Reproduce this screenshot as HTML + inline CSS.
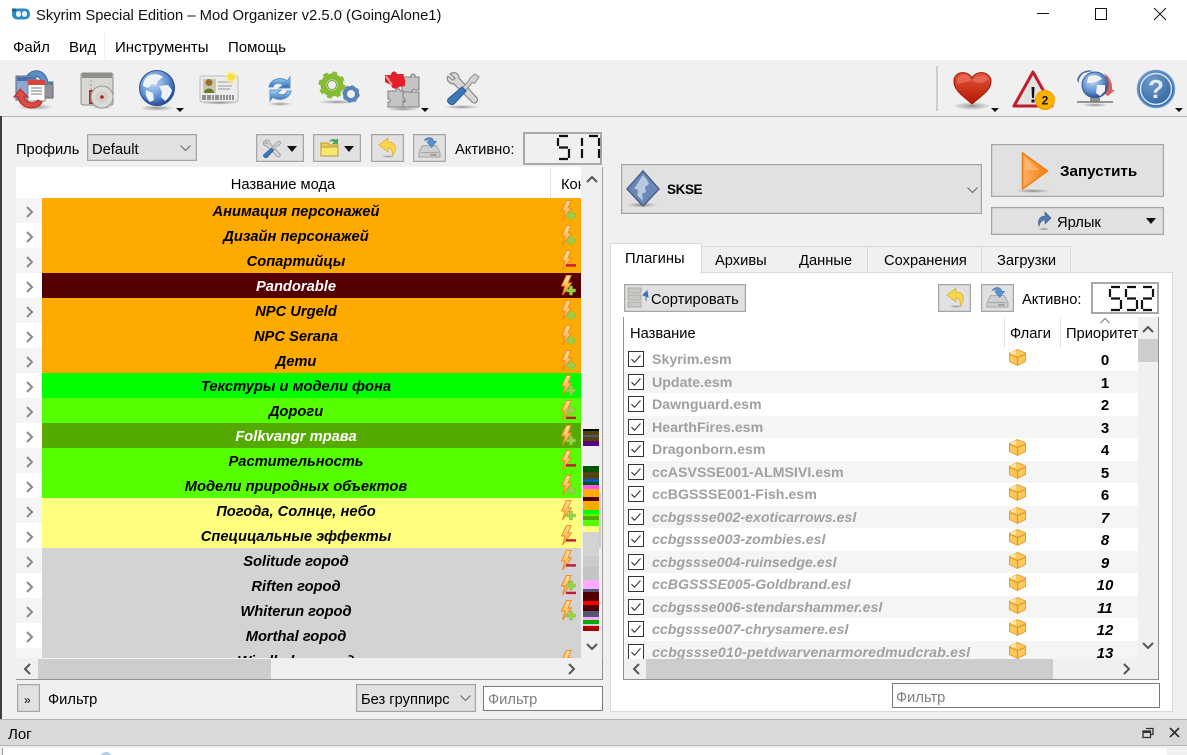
<!DOCTYPE html>
<html lang="ru"><head><meta charset="utf-8"><title>Mod Organizer</title>
<style>
*{box-sizing:border-box}
html,body{margin:0;padding:0;width:1187px;height:755px;overflow:hidden;background:#f0f0f0;font-family:"Liberation Sans","Noto Sans CJK SC",sans-serif;font-size:14.7px;color:#000}
#app{position:relative;width:1187px;height:755px;overflow:hidden}
.a{position:absolute}
.t{position:absolute;white-space:nowrap;line-height:18px;height:18px}
.btn{position:absolute;background:#e1e1e1;border:1px solid #a5a5a5;box-shadow:inset 0 0 0 .5px #c4c4c4}
.row{position:absolute;left:42px;width:508px;height:25px;line-height:29px;text-align:center;font-weight:bold;font-style:italic;white-space:nowrap;font-size:14.7px}
.p{position:absolute;left:0;width:514px;height:22.5px}
.p.s{background:#f5f5f5}
.n{position:absolute;left:28px;top:1px;line-height:23px;font-weight:bold;font-size:14.2px;color:#a0a0a0;white-space:nowrap}
.o{position:absolute;left:465px;width:32px;top:1px;line-height:23px;text-align:center;font-weight:bold;font-size:15px}
.i .n,.i .o{font-style:italic}
svg{position:absolute;overflow:visible}
</style></head><body><div id="app">

<svg width="0" height="0" style="left:0;top:0"><defs>
<linearGradient id="gO" x1="0" y1="0" x2="0" y2="1"><stop offset="0" stop-color="#ffe3a3"/><stop offset="1" stop-color="#ffa42e"/></linearGradient>
<linearGradient id="gG" x1="0" y1="0" x2="0" y2="1"><stop offset="0" stop-color="#a4dcf8"/><stop offset="1" stop-color="#2f62b0"/></linearGradient>
<radialGradient id="gGlobe" cx=".4" cy=".35" r=".7"><stop offset="0" stop-color="#c7dcf5"/><stop offset=".6" stop-color="#5e8fd0"/><stop offset="1" stop-color="#213f88"/></radialGradient>
<radialGradient id="gHelp" cx=".4" cy=".3" r=".8"><stop offset="0" stop-color="#6f9ccb"/><stop offset="1" stop-color="#2a5c9c"/></radialGradient>
<linearGradient id="gH" x1="0" y1="0" x2="0" y2="1"><stop offset="0" stop-color="#e2553e"/><stop offset="1" stop-color="#b51700"/></linearGradient>
<linearGradient id="gPlay" x1="0" y1="0" x2="1" y2="0"><stop offset="0" stop-color="#ffb066"/><stop offset="1" stop-color="#f47b0a"/></linearGradient>
<radialGradient id="gSh"><stop offset="0" stop-color="#000" stop-opacity=".38"/><stop offset="1" stop-color="#000" stop-opacity="0"/></radialGradient>
<symbol id="bolt" viewBox="0 0 20 22" width="20" height="22" overflow="visible"><path d="M6.500 .5 L1.500 11 L5 11 L2.500 20 L11.500 8 L8 8 L11 .5Z" fill="url(#gO)" stroke="#ee8a20" stroke-width="1"/></symbol>
<symbol id="plus" viewBox="0 0 20 22" width="20" height="22" overflow="visible"><path d="M6.500 14H9.500V11H12.500V14H15.500V17H12.500V20H9.500V17H6.500Z" fill="#9bd04f" stroke="#86b93c" stroke-width=".5"/></symbol>
<symbol id="minus" viewBox="0 0 20 22" width="20" height="22" overflow="visible"><rect x="6" y="14.200" width="10" height="2.400" fill="#c8173c"/></symbol>
<symbol id="box" viewBox="0 0 18 18" width="18" height="18" overflow="visible"><path d="M.5 4.500 L8.500 .5 L16.500 4 L16.500 12.500 L8.500 16.500 L.5 12.500Z" fill="#fcc85a" stroke="#e6a036" stroke-width="1"/><path d="M1 5.500L8.500 8.500L16 5.500M8.500 8.500V16" fill="none" stroke="#dc9428" stroke-width="1.100"/><path d="M2 3.500L7 1.500V6L2 5Z" fill="#ffeab0"/></symbol>
<symbol id="chk" viewBox="0 0 16 16" width="16" height="16" overflow="visible"><rect x=".5" y=".5" width="15" height="15" fill="#fff" stroke="#333"/><path d="M3.500 8.200L6.500 11.200L12.500 4.500" fill="none" stroke="#333" stroke-width="1.100"/></symbol>
<symbol id="tools" viewBox="0 0 36 36" width="36" height="36" overflow="visible"><path d="M5 3 C9 0 14 2 14 7 L32 27 C34 30 30 34 27 31 L9 13 C4 13 1 9 3 5 L8 9 L10 7Z" fill="#d6d6d6" stroke="#888" stroke-width="1.200"/><path d="M30 3 L34 6 L30 12 L27 12 L20 20 L17 17 L24 9.500 L25 7Z" fill="#cfd3d6" stroke="#8a8a8a"/><path d="M17 16 L21 20 L9 33 C6 35 1 31 3 28Z" fill="#3d77b8" stroke="#25568f"/></symbol>
<symbol id="undo" viewBox="0 0 18 20" width="18" height="20" overflow="visible"><ellipse cx="9" cy="18.500" rx="7" ry="1.300" fill="url(#gSh)"/><path d="M9 0 L0 7 L9 14 V10 C12 10 14 12 13 18 C18 13 18 4 9 4Z" fill="#f7d54a" stroke="#dcae2a" stroke-width=".7"/></symbol>
<symbol id="save" viewBox="0 0 26 26" width="26" height="26" overflow="visible"><path d="M5 11H21L25 19V24H1V19Z" fill="#cdd0d2" stroke="#9a9ea0"/><path d="M3 19H23" stroke="#999"/><rect x="14" y="20.500" width="7" height="2" fill="#999ea0"/><path d="M7 5C10 0 17 1 18 6H21L15.500 13L10 6.500H14C13 4.500 10 4 7 5Z" fill="#5c92ca" stroke="#3f74ad" stroke-width=".7"/></symbol>
</defs></svg>

<!-- title bar -->
<div class="a" style="left:0;top:0;width:1187px;height:60px;background:#fff"></div>
<svg style="left:11px;top:7px" width="20" height="14"><rect x="1" y="1.500" width="18" height="11" rx="5" fill="#2d88c7"/><rect x="5" y="4" width="5" height="6" rx="2.500" fill="#e9f4fb"/><rect x="11" y="4" width="5" height="6" rx="2.500" fill="#e9f4fb"/><rect x="1" y="1.500" width="4" height="3" fill="#1d5f8d"/></svg>
<div class="t" style="left:36px;top:7px;font-size:14.8px;color:#111">Skyrim Special Edition – Mod Organizer v2.5.0 (GoingAlone1)</div>
<svg style="left:1030px;top:0" width="157" height="30" fill="none" stroke="#111" stroke-width="1"><path d="M7 13.500H19"/><rect x="65.500" y="8.500" width="11" height="11"/><path d="M124 8L136 20M136 8L124 20"/></svg>
<!-- menu -->
<div class="t" style="left:13px;top:39px;font-size:15px">Файл</div>
<div class="t" style="left:69px;top:39px;font-size:15px">Вид</div>
<div class="a" style="left:104px;top:33px;width:1px;height:26px;background:#eee"></div>
<div class="t" style="left:115px;top:39px;font-size:15px">Инструменты</div>
<div class="t" style="left:228px;top:39px;font-size:15px">Помощь</div>
<!-- toolbar -->
<div class="a" style="left:0;top:60px;width:1187px;height:56.500px;background:#f0f0f0;border-bottom:1px solid #b4b4b4"></div>
<svg style="left:0;top:60px;filter:blur(.35px)" width="1187" height="56">
  <!-- 1 -->
  <ellipse cx="35" cy="47" rx="18" ry="3" fill="url(#gSh)"/>
  <path d="M25 22C26 9 44 5 48 22L53 22L46 31L38 22L42 22C39 14 31 15 30 23Z" fill="#5f8fc7" stroke="#3a6aa4"/>
  <rect x="16" y="16" width="20" height="24" fill="#8ea6cf" stroke="#596a84"/><rect x="17" y="17" width="18" height="4" fill="#4a6fb0"/>
  <rect x="35" y="24" width="18" height="14" fill="#8d9298" stroke="#666"/>
  <rect x="28" y="20" width="17" height="21" fill="#fff" stroke="#888"/><rect x="28" y="20" width="17" height="5" fill="#d8433c"/>
  <path d="M31 28H42M31 31H42M31 34H42" stroke="#777"/>
  <path d="M20 29L28 37L24 37C25 44 36 44 38 40L42 42C38 51 20 50 18 37L14 37Z" fill="#dc4b46" stroke="#b32a27"/>
  <!-- 2 -->
  <rect x="81" y="13" width="32" height="32" rx="2" fill="#d8d7d3" stroke="#8d8c88"/><rect x="82" y="13" width="30" height="5" fill="#8f8d88"/>
  <rect x="89" y="30" width="4" height="14" fill="#b92c22"/><path d="M91 20V44" stroke="#999" stroke-dasharray="2 2"/>
  <ellipse cx="102" cy="47" rx="11" ry="2" fill="url(#gSh)"/>
  <circle cx="102" cy="37" r="11" fill="#dcdcd6" stroke="#999"/><circle cx="102" cy="37" r="6" fill="#cfcfc8"/><circle cx="102" cy="37" r="1.800" fill="#b52020"/>
  <!-- 3 globe -->
  <ellipse cx="157" cy="48" rx="17" ry="3" fill="url(#gSh)"/>
  <circle cx="157" cy="28" r="17.500" fill="url(#gGlobe)" stroke="#2b4c93"/>
  <path d="M148 16C152 13 160 14 163 17L158 21L156 25L152 24L148 28L143 26C143 22 145 18 148 16ZM159 26L168 25L172 30C171 35 168 39 165 41L161 37L162 32ZM146 30L153 33L154 40L150 42C147 39 145 35 146 30Z" fill="#eef3f8"/>
  <path d="M176 48H184L180 52Z" fill="#111"/>
  <!-- 4 card -->
  <rect x="200" y="16" width="38" height="26" rx="2" fill="#ececea" stroke="#bbb"/><ellipse cx="219" cy="43" rx="18" ry="1.500" fill="url(#gSh)"/>
  <rect x="203" y="19" width="13" height="14" fill="#c9c7b0"/><circle cx="209" cy="22.500" r="3.500" fill="#9c6f2f"/><path d="M204 33C204 27 214 27 214 33Z" fill="#6a7a2a"/>
  <path d="M218 22H233M218 26H232M218 29H230" stroke="#999"/>
  <path d="M203 35V40M205 35V40M208 35V40M210 35V40M213 35V40M216 35V40M218 35V40M221 35V40M224 35V40M227 35V40M230 35V40M233 35V40" stroke="#333" stroke-width="1"/>
  <circle cx="231" cy="17" r="6" fill="#ffef7f" opacity=".6"/><circle cx="231" cy="17" r="3.500" fill="#f6e03a"/>
  <!-- 5 refresh -->
  <ellipse cx="280" cy="44" rx="12" ry="2" fill="url(#gSh)"/>
  <path d="M269 27C270 19 282 16 287 21L290 17V28H279L283 25C279 22 274 23 273 27Z" fill="url(#gG)" stroke="#5a93cc"/>
  <path d="M291 31C290 39 278 42 273 37L270 41V30H281L277 33C281 36 286 35 287 31Z" fill="url(#gG)" stroke="#5a93cc"/>
  <!-- 6 gears -->
  <ellipse cx="337" cy="42" rx="20" ry="2" fill="url(#gSh)"/>
  <circle cx="332" cy="25" r="11" fill="none" stroke="#83bb33" stroke-width="5" stroke-dasharray="4.500 4.130"/><circle cx="332" cy="25" r="8.500" fill="none" stroke="#84bd34" stroke-width="6"/><circle cx="332" cy="25" r="4.500" fill="#f0f0f0" stroke="#6d9c2c"/>
  <circle cx="351" cy="34" r="6" fill="none" stroke="#5885b5" stroke-width="4"/><circle cx="351" cy="34" r="7.500" fill="none" stroke="#5885b5" stroke-width="2.500" stroke-dasharray="3 2.890"/><circle cx="351" cy="34" r="2.500" fill="#f0f0f0"/>
  <!-- 7 puzzle -->
  <ellipse cx="403" cy="49" rx="17" ry="2" fill="url(#gSh)"/>
  <g fill="#c4c4c4" stroke="#7f7f7f"><path d="M403 17H411C410 13 416 13 415 17H419V30H415C413 28 411 30 413 33H402V23C405 24 405 19 403 19Z"/><path d="M388 31H396C395 28 401 28 400 31H403V38C406 37 406 42 403 41V47H388V42C391 43 391 38 388 39Z"/><path d="M403 32H419V47H403V42C406 43 406 38 403 38Z"/></g>
  <path d="M385 15L391 15C391 11 396 10 397 14L404 14C402 17 407 20 405 22L405 26L399 27C396 30 392 29 391 25L385 22Z" fill="#e2202a"/><path d="M386 16L392 25" stroke="#f0a0a0" stroke-width="2"/>
  <path d="M421 48H429L425 52Z" fill="#111"/>
  <!-- 8 tools -->
  <ellipse cx="462" cy="47" rx="18" ry="2" fill="url(#gSh)"/>
  <use href="#tools" x="445" y="11"/>
  <!-- right side -->
  <rect x="936" y="6" width="2" height="45" fill="#ccc"/>
  <ellipse cx="972" cy="46" rx="19" ry="4" fill="url(#gSh)"/>
  <path d="M972 44C963 36 953 30 954 20C955 11 968 10 972 18C976 10 989 11 991 20C992 30 981 36 972 44Z" fill="url(#gH)" stroke="#a51a08"/>
  <path d="M957 20C960 13 969 14 971 19C976 25 983 24 989 19C985 14 976 15 972 20C967 22 962 23 957 24Z" fill="#ef7d6d" opacity=".55"/>
  <path d="M991 48H999L995 52Z" fill="#111"/>
  <path d="M1033 12L1052 46H1014Z" fill="#e2e2e2" stroke="#c21c2c" stroke-width="3" stroke-linejoin="round"/>
  <path d="M1031.500 27H1034.500L1034 38H1032Z M1031.500 39.500H1034.500V42.500H1031.500Z" fill="#111"/>
  <circle cx="1045" cy="40" r="9.500" fill="#fdb100" stroke="#f79a00"/><text x="1045" y="44.500" font-size="12" font-weight="bold" text-anchor="middle" font-family="Liberation Sans,sans-serif" fill="#111">2</text>
  <path d="M1077 20C1079 12 1087 9 1093 11L1084 13C1080 16 1078 20 1079 24Z" fill="#4b6fa5"/><path d="M1104 13C1110 17 1113 24 1112 30L1115 30L1108 36L1101 32L1107 31C1108 24 1107 18 1104 13Z" fill="#d86060"/>
  <circle cx="1095" cy="25" r="13" fill="url(#gGlobe)" stroke="#445f98"/><path d="M1088 17C1092 14 1100 15 1102 19L1096 22L1091 23L1087 23ZM1097 25L1105 25L1105 31L1100 36L1096 33Z" fill="#f1f1f1"/>
  <rect x="1090" y="38" width="10" height="4" fill="#8f8f8f"/><path d="M1077 42H1113" stroke="#777" stroke-width="1.500"/><ellipse cx="1095" cy="45" rx="13" ry="2" fill="url(#gSh)"/>
  <circle cx="1156" cy="29" r="18.500" fill="url(#gHelp)" stroke="#6b9bd0" stroke-width="1.500"/><circle cx="1156" cy="29" r="15.500" fill="none" stroke="#d5e3f2" stroke-width="1.500"/>
  <text x="1156" y="38" font-size="26" font-weight="bold" text-anchor="middle" font-family="Liberation Sans,sans-serif" fill="#e4ebf3">?</text>
  <path d="M1175 48H1183L1179 52Z" fill="#111"/>
</svg>

<!-- left edge -->
<div class="a" style="left:0;top:116px;width:2px;height:604px;background:#3a3f44"></div>

<!-- profile row -->
<div class="t" style="left:16px;top:141px">Профиль</div>
<div class="btn" style="left:87px;top:134px;width:110px;height:27px"></div>
<div class="t" style="left:92px;top:141px">Default</div>
<svg style="left:180px;top:145px" width="11" height="7" fill="none" stroke="#666"><path d="M.5 .5L5.500 5.500L10.500 .5"/></svg>
<div class="btn" style="left:256px;top:134px;width:48px;height:28px"></div>
<svg style="left:262px;top:139px" width="20" height="20"><use href="#tools" transform="scale(.56)"/></svg>
<svg style="left:287px;top:146px" width="10" height="6"><path d="M0 0H10L5 6Z" fill="#111"/></svg>
<div class="btn" style="left:313px;top:134px;width:48px;height:28px"></div>
<svg style="left:320px;top:137px" width="20" height="21"><path d="M1 6H8L10 8H18V19H1Z" fill="#edd04f" stroke="#b39c30"/><path d="M1 10H18V19H1Z" fill="#f8e76f" stroke="#b39c30"/><path d="M9 5C10 2 14 1 16 3L18 1V7H12L14 5C13 4 11 4 9 5Z" fill="#4fa24f"/></svg>
<svg style="left:344px;top:146px" width="10" height="6"><path d="M0 0H10L5 6Z" fill="#111"/></svg>
<div class="btn" style="left:371px;top:134px;width:33px;height:28px"></div>
<svg style="left:379px;top:138px" width="18" height="20"><use href="#undo"/></svg>
<div class="btn" style="left:413px;top:134px;width:33px;height:28px"></div>
<svg style="left:418px;top:136px" width="26" height="22"><use href="#save" transform="scale(.88)"/></svg>
<div class="t" style="left:455px;top:141px">Активно:</div>
<div class="a" style="left:523px;top:132px;width:79px;height:33px;border:2px solid #a8a8a8;background:#f0f0f0"></div>
<svg style="left:556px;top:135px" width="46" height="26" fill="none" stroke="#111" stroke-width="2.200"><path d="M3 1H12M2 3V11M3 12.500H12M13 14V23M3 24H12"/><path d="M26 3V11M26 14V23"/><path d="M33 1H42M43 3V11M43 14V23"/></svg>

<!-- mod list -->
<div class="a" style="left:16px;top:167px;width:587px;height:513px;background:#fff;overflow:hidden">
  <div class="a" style="left:534px;top:0;width:1px;height:31px;background:#e3e3e3"></div>
  <div class="t" style="left:0;width:534px;top:9px;text-align:center">Название мода</div>
  <div class="t" style="left:545px;top:9px;width:20px;overflow:hidden">Контент</div>
  <div class="a" style="left:565px;top:0;width:22px;height:491px;background:#f0f0f0"></div>
  <div class="a" style="left:0;top:491px;width:587px;height:22px;background:#f0f0f0"></div>
</div>
<div class="a" style="left:16px;top:198px;width:26px;height:460px;background:repeating-linear-gradient(180deg,#f5f5f5 0,#f5f5f5 25px,#fff 25px,#fff 50px)"></div>
<div class="a" style="left:42px;top:198px;width:539px;height:460px;overflow:hidden;background:#d3d3d3">
  <div class="a" style="left:0;top:0;width:539px;height:75px;background:#ffaa00"></div>
  <div class="a" style="left:0;top:75px;width:539px;height:25px;background:#550000"></div>
  <div class="a" style="left:0;top:100px;width:539px;height:75px;background:#ffaa00"></div>
  <div class="a" style="left:0;top:175px;width:539px;height:25px;background:#00ff00"></div>
  <div class="a" style="left:0;top:200px;width:539px;height:25px;background:#55ff00"></div>
  <div class="a" style="left:0;top:225px;width:539px;height:25px;background:#55aa00"></div>
  <div class="a" style="left:0;top:250px;width:539px;height:50px;background:#55ff00"></div>
  <div class="a" style="left:0;top:300px;width:539px;height:50px;background:#ffff7f"></div>
  <div class="row" style="left:0;top:0">Анимация персонажей</div>
  <div class="row" style="left:0;top:25px">Дизайн персонажей</div>
  <div class="row" style="left:0;top:50px">Сопартийцы</div>
  <div class="row" style="left:0;top:75px;color:#fff">Pandorable</div>
  <div class="row" style="left:0;top:100px">NPC Urgeld</div>
  <div class="row" style="left:0;top:125px">NPC Serana</div>
  <div class="row" style="left:0;top:150px">Дети</div>
  <div class="row" style="left:0;top:175px">Текстуры и модели фона</div>
  <div class="row" style="left:0;top:200px">Дороги</div>
  <div class="row" style="left:0;top:225px;color:#fff">Folkvangr трава</div>
  <div class="row" style="left:0;top:250px">Растительность</div>
  <div class="row" style="left:0;top:275px">Модели природных объектов</div>
  <div class="row" style="left:0;top:300px">Погода, Солнце, небо</div>
  <div class="row" style="left:0;top:325px">Специцальные эффекты</div>
  <div class="row" style="left:0;top:350px">Solitude город</div>
  <div class="row" style="left:0;top:375px">Riften город</div>
  <div class="row" style="left:0;top:400px">Whiterun город</div>
  <div class="row" style="left:0;top:425px">Morthal город</div>
  <div class="row" style="left:0;top:450px">Windhelm город</div>
  <svg style="left:518px;top:0" width="21" height="460">
    <use href="#bolt" y="2"/><use href="#plus" y="2"/>
    <use href="#bolt" y="27"/><use href="#plus" y="27"/>
    <use href="#bolt" y="52"/><use href="#minus" y="52"/>
    <use href="#bolt" y="77"/><use href="#plus" y="77"/>
    <use href="#bolt" y="102"/><use href="#plus" y="102"/>
    <use href="#bolt" y="127"/><use href="#plus" y="127"/>
    <use href="#bolt" y="152"/><use href="#plus" y="152"/>
    <use href="#bolt" y="177"/><use href="#plus" y="177"/>
    <use href="#bolt" y="202"/><use href="#plus" y="197"/><use href="#minus" y="204.500"/>
    <use href="#bolt" y="227"/><use href="#plus" y="227"/>
    <use href="#bolt" y="252"/><use href="#minus" y="252"/>
    <use href="#bolt" y="277"/><use href="#plus" y="277"/>
    <use href="#bolt" y="302"/><use href="#plus" y="302"/>
    <use href="#bolt" y="327"/><use href="#minus" y="327"/>
    <use href="#bolt" y="352"/><use href="#minus" y="352"/>
    <use href="#bolt" y="377"/><use href="#plus" y="372"/><use href="#minus" y="379.500"/>
    <use href="#bolt" y="402"/><use href="#plus" y="402"/>
    <use href="#bolt" y="452"/>
  </svg>
</div>
<svg style="left:16px;top:198px" width="26" height="460" fill="none" stroke="#8a8a8a" stroke-width="2"><path d="M11 9L16 14L11 19M11 34L16 39L11 44M11 59L16 64L11 69M11 84L16 89L11 94M11 109L16 114L11 119M11 134L16 139L11 144M11 159L16 164L11 169M11 184L16 189L11 194M11 209L16 214L11 219M11 234L16 239L11 244M11 259L16 264L11 269M11 284L16 289L11 294M11 309L16 314L11 319M11 334L16 339L11 344M11 359L16 364L11 369M11 384L16 389L11 394M11 409L16 414L11 419M11 434L16 439L11 444"/></svg>
<!-- overview strip -->
<div class="a" style="left:583px;top:429px;width:16px;height:202px;background:linear-gradient(180deg,#000 0,#000 2px,#4f4400 2px,#4f4400 6px,#555577 6px,#555577 8px,#554400 8px,#554400 12px,#550088 12px,#550088 17px,#f0f0f0 17px,#f0f0f0 37px,#005500 37px,#005500 43px,#554400 43px,#554400 50px,#0055cc 50px,#0055cc 53px,#005500 53px,#005500 56px,#ff55ff 56px,#ff55ff 60px,#ffaa00 60px,#ffaa00 68px,#550000 68px,#550000 72px,#ffaa00 72px,#ffaa00 81px,#00ff00 81px,#00ff00 85px,#55ff00 85px,#55ff00 87px,#55aa00 87px,#55aa00 91px,#55ff00 91px,#55ff00 97px,#ffff7f 97px,#ffff7f 103px,#d3d3d3 103px,#d3d3d3 127px,#cbcbc8 127px,#cbcbc8 138px,#c1c5c5 138px,#c1c5c5 151px,#ffaaff 151px,#ffaaff 160px,#555577 160px,#555577 163px,#550000 163px,#550000 172px,#ff0000 172px,#ff0000 176px,#550000 176px,#550000 182px,#555577 182px,#555577 188px,#ffaaff 188px,#ffaaff 191px,#00aa00 191px,#00aa00 195px,#d3d3d3 195px,#d3d3d3 197px,#aa0000 197px,#aa0000 202px)"></div>
<div class="a" style="left:599px;top:492px;width:2px;height:56px;background:#cdcdcd"></div>
<svg style="left:581px;top:167px" width="22" height="491" fill="none" stroke="#555" stroke-width="2"><path d="M6 15L11 10L16 15M6 477L11 482L16 477"/></svg>
<div class="a" style="left:16px;top:658px;width:587px;height:22px;background:#f0f0f0;border-bottom:1px solid #8f8f8f;border-right:1px solid #8f8f8f"></div>
<div class="a" style="left:38px;top:659px;width:233px;height:20px;background:#cdcdcd"></div>
<svg style="left:16px;top:659px" width="570" height="20" fill="none" stroke="#555" stroke-width="2"><path d="M14 5L9 10L14 15M553 5L558 10L553 15"/></svg>
<div class="a" style="left:602px;top:167px;width:1px;height:492px;background:#a0a0a0"></div>

<!-- filter row left -->
<div class="btn" style="left:17px;top:684px;width:23px;height:28px"></div>
<div class="t" style="left:24px;top:691px;font-size:12px">»</div>
<div class="t" style="left:48px;top:691px">Фильтр</div>
<div class="btn" style="left:356px;top:684px;width:120px;height:28px"></div>
<div class="t" style="left:361px;top:691px;width:93px;overflow:hidden">Без группирс</div>
<svg style="left:460px;top:695px" width="11" height="7" fill="none" stroke="#666"><path d="M.5 .5L5.500 5.500L10.500 .5"/></svg>
<div class="a" style="left:483px;top:686px;width:120px;height:25px;background:#fff;border:1px solid #7a7a7a"></div>
<div class="t" style="left:488px;top:691px;color:#7f7f7f">Фильтр</div>

<!-- right top -->
<div class="btn" style="left:621px;top:164px;width:361px;height:50px"></div>
<svg style="left:626px;top:170px" width="38" height="38"><ellipse cx="16" cy="35" rx="15" ry="2.500" fill="url(#gSh)"/><path d="M17 1L33 19L17 36L1 19Z" fill="#6a88b8" stroke="#4f6188" stroke-width="1.500"/><path d="M17 5L8 19C12 18 13 22 11 25L17 31L16 24L20 22L19 17L23 14L21 10Z" fill="#b7c8e0"/></svg>
<div class="t" style="left:667px;top:181px;font-weight:bold;font-size:13.500px;letter-spacing:-.4px">SKSE</div>
<svg style="left:967px;top:187px" width="11" height="7" fill="none" stroke="#666"><path d="M.5 .5L5.500 5.500L10.500 .5"/></svg>
<div class="btn" style="left:991px;top:144px;width:173px;height:53px"></div>
<svg style="left:1015px;top:150px" width="36" height="44"><ellipse cx="18" cy="41" rx="17" ry="2" fill="url(#gSh)"/><path d="M7.500 3L32.500 21L7.500 39Z" fill="url(#gPlay)" stroke="#ef7d10" stroke-width="1.500"/><path d="M10 8L25 20L10 20Z" fill="#ffc98f" opacity=".5"/></svg>
<div class="t" style="left:1060px;top:163px;font-weight:bold;font-size:15.200px">Запустить</div>
<div class="btn" style="left:991px;top:207px;width:173px;height:28px"></div>
<svg style="left:1036px;top:211px" width="18" height="22"><ellipse cx="8" cy="18" rx="6" ry="1.500" fill="url(#gSh)"/><path d="M3 15C1 8 5 5 9 5V1L15 7L9 13V9C6 9 4 11 3 15Z" fill="#4f79ac" stroke="#3b5d87" stroke-width=".6"/></svg>
<div class="t" style="left:1057px;top:214px">Ярлык</div>
<svg style="left:1146px;top:218px" width="10" height="6"><path d="M0 0H10L5 6Z" fill="#111"/></svg>

<!-- tabs -->
<div class="a" style="left:701px;top:246px;width:370px;height:27px;background:#f0f0f0;border:1px solid #d9d9d9"></div>
<div class="a" style="left:867px;top:246px;width:1px;height:26px;background:#d9d9d9"></div>
<div class="a" style="left:981px;top:246px;width:1px;height:26px;background:#d9d9d9"></div>
<div class="a" style="left:610px;top:272px;width:563px;height:440px;background:#fff;border:1px solid #d9d9d9"></div>
<div class="a" style="left:610px;top:243px;width:92px;height:31px;background:#fff;border:1px solid #d9d9d9;border-bottom:0"></div>
<div class="t" style="left:625px;top:250px">Плагины</div>
<div class="t" style="left:715px;top:252px">Архивы</div>
<div class="t" style="left:799px;top:252px">Данные</div>
<div class="t" style="left:884px;top:252px">Сохранения</div>
<div class="t" style="left:997px;top:252px">Загрузки</div>

<!-- plugin top row -->
<div class="btn" style="left:624px;top:284px;width:122px;height:28px"></div>
<svg style="left:628px;top:288px" width="22" height="20"><rect x="0" y="0" width="13" height="5" fill="#c9c9c4" stroke="#aaa"/><rect x="0" y="7" width="13" height="5" fill="#c9c9c4" stroke="#aaa"/><rect x="0" y="14" width="13" height="5" fill="#c9c9c4" stroke="#aaa"/><path d="M15 7L19 3L20 9Z M18 7V13" fill="#3e74b2" stroke="#3e74b2"/></svg>
<div class="t" style="left:651px;top:291px">Сортировать</div>
<div class="btn" style="left:938px;top:284px;width:33px;height:28px"></div>
<svg style="left:947px;top:288px" width="18" height="20"><use href="#undo"/></svg>
<div class="btn" style="left:981px;top:284px;width:33px;height:28px"></div>
<svg style="left:986px;top:286px" width="26" height="24"><use href="#save" transform="scale(.88)"/></svg>
<div class="t" style="left:1022px;top:291px">Активно:</div>
<div class="a" style="left:1091px;top:282px;width:68px;height:32px;border:2px solid #a8a8a8;background:#fff"></div>
<svg style="left:1108px;top:286px" width="48" height="26" fill="none" stroke="#111" stroke-width="2.200"><path d="M3 1H12M2 3V11M3 12.500H12M13 14V23M3 24H12"/><path d="M19 1H28M18 3V11M19 12.500H28M29 14V23M19 24H28"/><path d="M35 1H44M45 3V11M35 12.500H44M34 14V23M35 24H44"/></svg>

<!-- plugin list -->
<div class="a" style="left:623px;top:317px;width:536px;height:363px;background:#fff;border-left:1px solid #8f8f8f;border-right:1px solid #8f8f8f;border-bottom:1px solid #8f8f8f;overflow:hidden">
  <div class="t" style="left:6px;top:8px">Название</div>
  <div class="a" style="left:380px;top:0;width:1px;height:31px;background:#e3e3e3"></div>
  <div class="t" style="left:386px;top:8px">Флаги</div>
  <div class="a" style="left:436px;top:0;width:1px;height:31px;background:#e3e3e3"></div>
  <div class="t" style="left:442px;top:8px;width:72px;overflow:hidden">Приоритет</div>
  <svg style="left:476px;top:1px" width="10" height="6" fill="none" stroke="#777"><path d="M.5 5L5 .5L9.500 5"/></svg>
  <div class="a" style="left:0;top:31px;width:514px;height:311px;overflow:hidden">
    <div class="p" style="top:0"><svg style="left:4px;top:3px" width="16" height="16"><use href="#chk"/></svg><span class="n">Skyrim.esm</span><svg style="left:385px;top:1px" width="18" height="18"><use href="#box"/></svg><span class="o">0</span></div>
    <div class="p s" style="top:22.500px"><svg style="left:4px;top:3px" width="16" height="16"><use href="#chk"/></svg><span class="n">Update.esm</span><span class="o">1</span></div>
    <div class="p" style="top:45px"><svg style="left:4px;top:3px" width="16" height="16"><use href="#chk"/></svg><span class="n">Dawnguard.esm</span><span class="o">2</span></div>
    <div class="p s" style="top:67.500px"><svg style="left:4px;top:3px" width="16" height="16"><use href="#chk"/></svg><span class="n">HearthFires.esm</span><span class="o">3</span></div>
    <div class="p" style="top:90px"><svg style="left:4px;top:3px" width="16" height="16"><use href="#chk"/></svg><span class="n">Dragonborn.esm</span><svg style="left:385px;top:1px" width="18" height="18"><use href="#box"/></svg><span class="o">4</span></div>
    <div class="p s" style="top:112.500px"><svg style="left:4px;top:3px" width="16" height="16"><use href="#chk"/></svg><span class="n">ccASVSSE001-ALMSIVI.esm</span><svg style="left:385px;top:1px" width="18" height="18"><use href="#box"/></svg><span class="o">5</span></div>
    <div class="p" style="top:135px"><svg style="left:4px;top:3px" width="16" height="16"><use href="#chk"/></svg><span class="n">ccBGSSSE001-Fish.esm</span><svg style="left:385px;top:1px" width="18" height="18"><use href="#box"/></svg><span class="o">6</span></div>
    <div class="p s i" style="top:157.500px"><svg style="left:4px;top:3px" width="16" height="16"><use href="#chk"/></svg><span class="n">ccbgssse002-exoticarrows.esl</span><svg style="left:385px;top:1px" width="18" height="18"><use href="#box"/></svg><span class="o">7</span></div>
    <div class="p i" style="top:180px"><svg style="left:4px;top:3px" width="16" height="16"><use href="#chk"/></svg><span class="n">ccbgssse003-zombies.esl</span><svg style="left:385px;top:1px" width="18" height="18"><use href="#box"/></svg><span class="o">8</span></div>
    <div class="p s i" style="top:202.500px"><svg style="left:4px;top:3px" width="16" height="16"><use href="#chk"/></svg><span class="n">ccbgssse004-ruinsedge.esl</span><svg style="left:385px;top:1px" width="18" height="18"><use href="#box"/></svg><span class="o">9</span></div>
    <div class="p i" style="top:225px"><svg style="left:4px;top:3px" width="16" height="16"><use href="#chk"/></svg><span class="n">ccBGSSSE005-Goldbrand.esl</span><svg style="left:385px;top:1px" width="18" height="18"><use href="#box"/></svg><span class="o">10</span></div>
    <div class="p s i" style="top:247.500px"><svg style="left:4px;top:3px" width="16" height="16"><use href="#chk"/></svg><span class="n">ccbgssse006-stendarshammer.esl</span><svg style="left:385px;top:1px" width="18" height="18"><use href="#box"/></svg><span class="o">11</span></div>
    <div class="p i" style="top:270px"><svg style="left:4px;top:3px" width="16" height="16"><use href="#chk"/></svg><span class="n">ccbgssse007-chrysamere.esl</span><svg style="left:385px;top:1px" width="18" height="18"><use href="#box"/></svg><span class="o">12</span></div>
    <div class="p s i" style="top:292.500px"><svg style="left:4px;top:3px" width="16" height="16"><use href="#chk"/></svg><span class="n" style="letter-spacing:.15px">ccbgssse010-petdwarvenarmoredmudcrab.esl</span><svg style="left:385px;top:1px" width="18" height="18"><use href="#box"/></svg><span class="o">13</span></div>
  </div>
  <div class="a" style="left:514px;top:0;width:20px;height:342px;background:#f0f0f0"></div>
  <div class="a" style="left:514px;top:22px;width:20px;height:23px;background:#cdcdcd"></div>
  <svg style="left:514px;top:0" width="20" height="342" fill="none" stroke="#555" stroke-width="2"><path d="M5 15L10 10L15 15M5 326L10 331L15 326"/></svg>
  <div class="a" style="left:0;top:342px;width:534px;height:20px;background:#f0f0f0"></div>
  <div class="a" style="left:22px;top:342px;width:407px;height:20px;background:#cdcdcd"></div>
  <svg style="left:0;top:342px" width="534" height="20" fill="none" stroke="#555" stroke-width="2"><path d="M15 5L10 10L15 15M500 5L505 10L500 15"/></svg>
</div>
<div class="a" style="left:892px;top:683px;width:268px;height:25px;background:#fff;border:1px solid #7a7a7a"></div>
<div class="t" style="left:896px;top:689px;color:#7f7f7f">Фильтр</div>

<!-- log dock -->
<div class="a" style="left:0;top:719px;width:1187px;height:27px;background:#d9d9d9;border-top:1px solid #b4b4b4;border-bottom:1px solid #b4b4b4"></div>
<div class="t" style="left:8px;top:726px;font-size:15px">Лог</div>
<svg style="left:1142px;top:725px" width="42" height="16" fill="none" stroke="#333" stroke-width="1.300"><path d="M4 3.500H11V9.500H9"/><rect x="1" y="6" width="7.500" height="6.500" fill="#d9d9d9"/><path d="M1 7H8.500" stroke-width="2"/><path d="M28 3L37 12M37 3L28 12" stroke-width="1.800"/></svg>
<div class="a" style="left:2px;top:748px;width:1185px;height:7px;background:#fff;border-left:1px solid #999"></div>
<div class="a" style="left:100px;top:752px;width:12px;height:12px;border-radius:50%;background:#b9cbe0"></div>
<div class="a" style="left:1167px;top:748px;width:20px;height:7px;background:#f0f0f0"></div>

</div></body></html>
